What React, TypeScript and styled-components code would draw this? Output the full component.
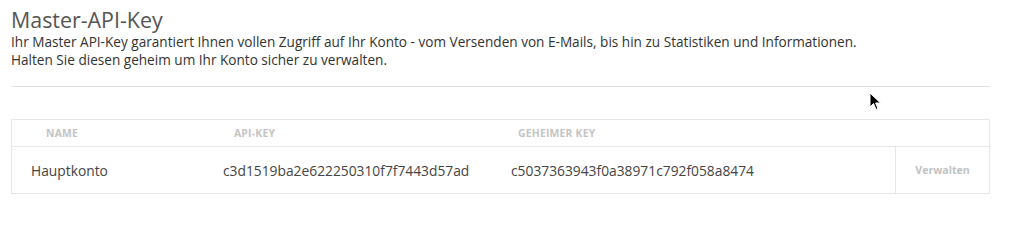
import styled, { createGlobalStyle } from 'styled-components'

const GlobalStyle = createGlobalStyle`
  html, body {
    margin: 0;
    padding: 0;
    background: #fff;
  }
  body {
    font-family: 'Open Sans', 'Noto Sans', sans-serif;
    color: #444;
  }
`

const Page = styled.div`
  position: relative;
  width: 979px;
  padding: 6px 0 0 11px;
`

const Title = styled.h2`
  margin: 0;
  font-size: 21.4px;
  font-weight: 400;
  line-height: 27px;
  color: #555;
`

const Description = styled.p`
  margin: 0;
  font-size: 13.6px;
  line-height: 18px;
  color: #333;
`

const Divider = styled.hr`
  margin: 17px 0 0;
  border: none;
  border-top: 1px solid #e3e3e3;
`

const Table = styled.div`
  margin-top: 32px;
  width: 979px;
  border: 1px solid #e6e6e6;
  box-sizing: border-box;
`

const HeadRow = styled.div`
  display: grid;
  grid-template-columns: 188px 284px 1fr;
  height: 26px;
  align-items: center;
  border-bottom: 1px solid #e6e6e6;
`

const HeadCell = styled.div`
  padding-left: 34px;
  font-size: 10.4px;
  font-weight: 700;
  letter-spacing: 0.2px;
  text-transform: uppercase;
  color: #c4c4c4;
`

const Row = styled.div`
  display: grid;
  grid-template-columns: 192px 288px 1fr 94px;
  height: 46px;
  align-items: stretch;
`

const Cell = styled.div`
  display: flex;
  align-items: center;
  padding-left: 19px;
  font-size: 13.8px;
  color: #444;
`

const ActionCell = styled.div`
  display: flex;
  align-items: center;
  justify-content: center;
  border-left: 1px solid #e6e6e6;
  font-size: 10.6px;
  font-weight: 700;
  color: #c2c2c2;
  cursor: pointer;
`

const Pointer = styled.svg`
  position: absolute;
  left: 869px;
  top: 92px;
`

export default function App() {
  return (
    <>
      <GlobalStyle />
      <Page>
        <Title>Master-API-Key</Title>
        <Description>
          Ihr Master API-Key garantiert Ihnen vollen Zugriff auf Ihr Konto - vom Versenden von E-Mails, bis hin zu Statistiken und Informationen.
        </Description>
        <Description>Halten Sie diesen geheim um Ihr Konto sicher zu verwalten.</Description>
        <Divider />
        <Table>
          <HeadRow>
            <HeadCell>Name</HeadCell>
            <HeadCell>API-Key</HeadCell>
            <HeadCell>Geheimer Key</HeadCell>
          </HeadRow>
          <Row>
            <Cell>Hauptkonto</Cell>
            <Cell>c3d1519ba2e622250310f7f7443d57ad</Cell>
            <Cell>c5037363943f0a38971c792f058a8474</Cell>
            <ActionCell>Verwalten</ActionCell>
          </Row>
        </Table>
        <Pointer width="13" height="19" viewBox="0 0 13 19">
          <path d="M1 1 L1 15 L4.5 11.5 L7 17.5 L9 16.6 L6.6 11 L11.5 11 Z" fill="#000" stroke="#fff" strokeWidth="1" />
        </Pointer>
      </Page>
    </>
  )
}
